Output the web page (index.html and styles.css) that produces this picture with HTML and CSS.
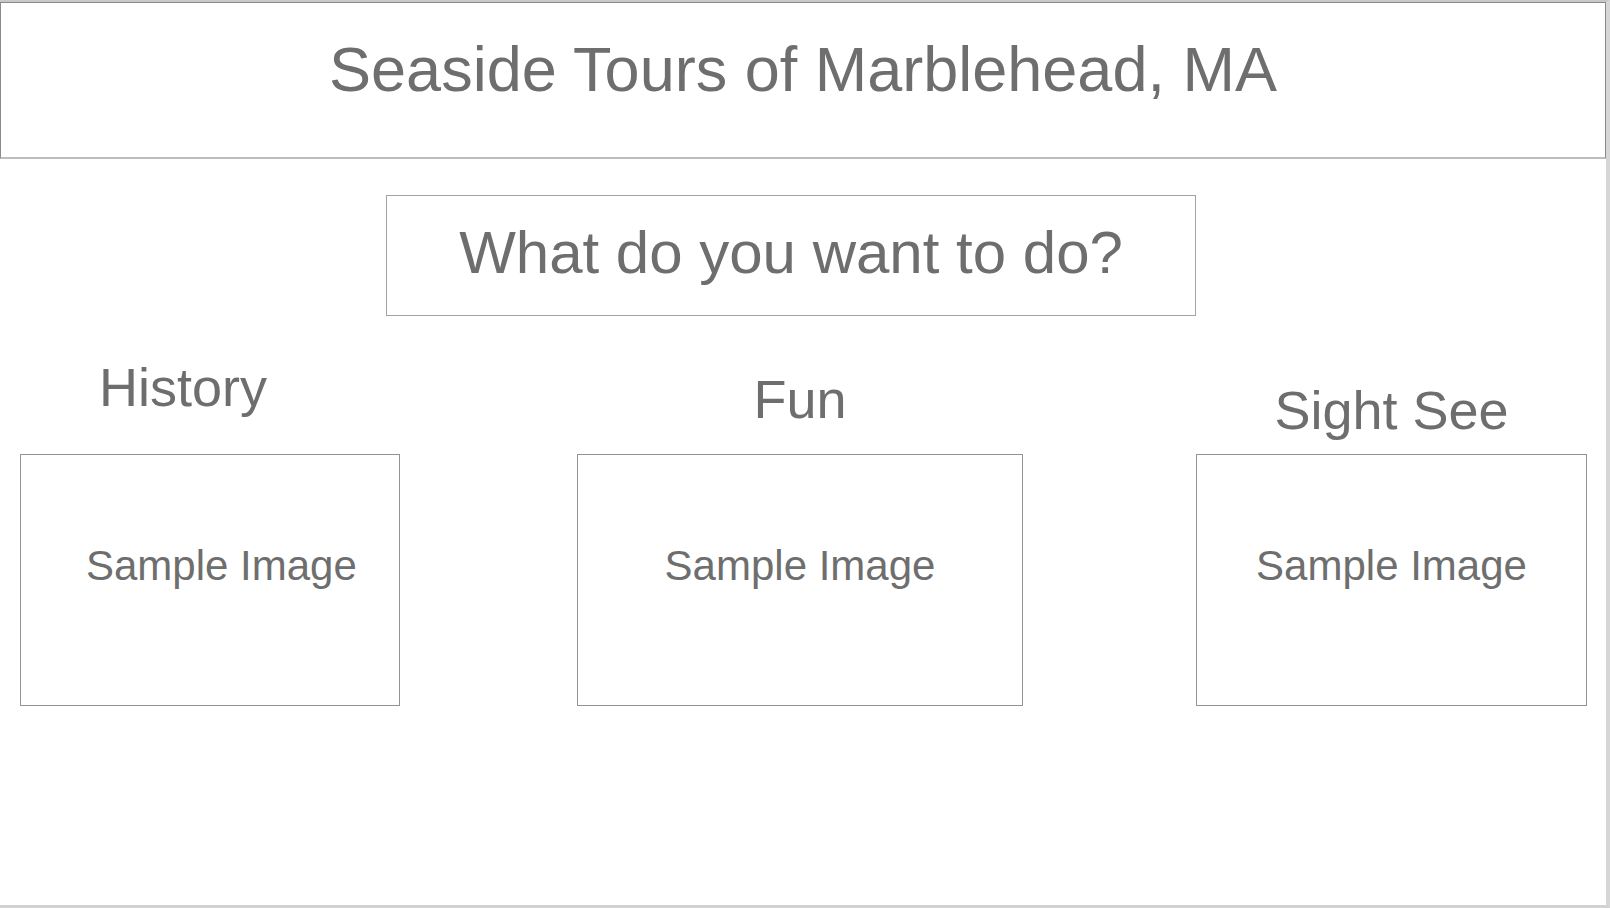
FILE: index.html
```html
<!DOCTYPE html>
<html lang="en">
<head>
<meta charset="utf-8">
<title>Seaside Tours of Marblehead, MA</title>
<link rel="stylesheet" href="styles.css">
</head>
<body>
<div class="frame">
  <header class="header">
    <h1 class="title">Seaside Tours of Marblehead, MA</h1>
  </header>
  <div class="question">What do you want to do?</div>
  <div class="row">
    <section class="col col-history">
      <div class="col-head"><h2 class="heading heading-history">History</h2></div>
      <div class="box box-history">Sample Image</div>
    </section>
    <section class="col col-fun">
      <div class="col-head"><h2 class="heading heading-fun">Fun</h2></div>
      <div class="box">Sample Image</div>
    </section>
    <section class="col col-sight">
      <div class="col-head"><h2 class="heading heading-sight">Sight See</h2></div>
      <div class="box">Sample Image</div>
    </section>
  </div>
</div>
</body>
</html>
```
FILE: styles.css
```css
html, body {
  margin: 0;
  padding: 0;
  background: #ffffff;
}
body {
  font-family: "Liberation Sans", Arial, Helvetica, sans-serif;
  color: #6e6e6e;
}
.frame {
  box-sizing: border-box;
  width: 1610px;
  height: 908px;
  border-top: 2px solid #c8c8c8;
  border-right: 4px solid #d6d6d6;
  border-bottom: 3px solid #d2d2d2;
  overflow: hidden;
}
.header {
  box-sizing: border-box;
  height: 157px;
  border-top: 1px solid #8a8a8a;
  border-left: 1px solid #8a8a8a;
  border-right: 1px solid #8a8a8a;
  border-bottom: 2px solid #bdbdbd;
  padding-top: 35px;
  text-align: center;
}
.title {
  margin: 0;
  font-size: 63px;
  font-weight: normal;
  line-height: 1;
}
.question {
  box-sizing: border-box;
  width: 810px;
  height: 121px;
  margin: 36px 0 0 386px;
  border: 1px solid #a2a2a2;
  padding-top: 27px;
  font-size: 60px;
  line-height: 1;
  text-align: center;
}
.row {
  display: flex;
  margin-top: 44px;
}
.col {
  display: flex;
  flex-direction: column;
}
.col-history {
  width: 380px;
  margin-left: 20px;
}
.col-fun {
  width: 446px;
  margin-left: 177px;
}
.col-sight {
  width: 391px;
  margin-left: 173px;
}
.col-head {
  height: 94px;
}
.heading {
  margin: 0;
  font-size: 54px;
  font-weight: normal;
  line-height: 1;
  text-align: center;
}
.heading-history {
  text-align: left;
  padding-left: 79px;
}
.heading-fun {
  padding-top: 12px;
}
.heading-sight {
  padding-top: 23px;
}
.box {
  box-sizing: border-box;
  height: 252px;
  border: 1px solid #939393;
  padding-top: 90px;
  font-size: 42px;
  line-height: 1;
  text-align: center;
}
.box-history {
  text-align: left;
  padding-left: 65px;
}
```
